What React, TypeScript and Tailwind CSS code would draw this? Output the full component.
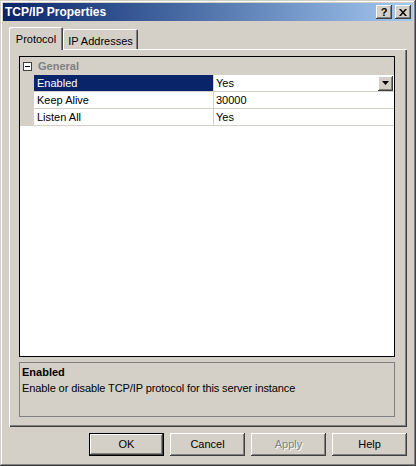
import React from "react";

const raised =
  "shadow-[inset_-1px_-1px_0_#404040,inset_1px_1px_0_#ffffff,inset_-2px_-2px_0_#808080,inset_2px_2px_0_#d4d0c8]";

function TitleBtn({ children }: { children: React.ReactNode }) {
  return (
    <div
      className={`w-[16px] h-[14px] bg-[#d4d0c8] flex items-center justify-center text-black font-bold text-[11px] leading-none ${raised}`}
    >
      {children}
    </div>
  );
}

function Btn({ label, def, disabled }: { label: string; def?: boolean; disabled?: boolean }) {
  const sh = def
    ? "shadow-[inset_0_0_0_1px_#000000,inset_-2px_-2px_0_#404040,inset_2px_2px_0_#ffffff,inset_-3px_-3px_0_#808080]"
    : raised;
  return (
    <div
      className={`w-[75px] h-[23px] bg-[#d4d0c8] flex items-center justify-center ${sh} ${
        disabled ? "text-[#808080] [text-shadow:1px_1px_0_#ffffff]" : "text-black"
      }`}
    >
      {label}
    </div>
  );
}

function Row({
  name,
  value,
  selected,
  dropdown,
}: {
  name: string;
  value: string;
  selected?: boolean;
  dropdown?: boolean;
}) {
  return (
    <div className="flex h-[17px] border-b border-[#d4d0c8]">
      <div className="w-[14px] bg-[#d4d0c8]" />
      <div
        className={`w-[180px] border-r border-[#d4d0c8] pl-[3px] flex items-center ${
          selected ? "bg-[#0a246a] text-white" : "text-black"
        }`}
      >
        {name}
      </div>
      <div className="flex-1 pl-[2px] flex items-center justify-between">
        <span>{value}</span>
        {dropdown && (
          <div className={`w-[15px] h-[15px] mr-[1px] bg-[#d4d0c8] flex items-center justify-center ${raised}`}>
            <svg width="7" height="4" viewBox="0 0 7 4">
              <path d="M0 0h7L3.5 4z" fill="#000" />
            </svg>
          </div>
        )}
      </div>
    </div>
  );
}

export default function App() {
  return (
    <div className="w-[416px] h-[466px] bg-[#d4d0c8] p-[3px] flex flex-col font-['Liberation_Sans',Arial,sans-serif] text-[11px] text-black shadow-[inset_-1px_-1px_0_#404040,inset_1px_1px_0_#d4d0c8,inset_-2px_-2px_0_#808080,inset_2px_2px_0_#ffffff]">
      <div className="h-[18px] flex items-center justify-between pl-[2px] pr-[2px] bg-linear-to-r from-[#0a246a] to-[#a6caf0]">
        <span className="text-white font-bold text-[12px]">TCP/IP Properties</span>
        <div className="flex gap-[3px]">
          <TitleBtn>?</TitleBtn>
          <TitleBtn>
            <svg width="8" height="7" viewBox="0 0 8 7">
              <path d="M0 0h2l2 2.5L6 0h2L5 3.5 8 7H6L4 4.5 2 7H0l3-3.5z" fill="#000" />
            </svg>
          </TitleBtn>
        </div>
      </div>

      <div className="flex flex-col px-[6px] pt-[6px]">
        <div className="flex items-end h-[22px]">
          <div className="relative z-10 h-[23px] w-[54px] -mb-[1px] bg-[#d4d0c8] rounded-t-[2px] flex items-start justify-center pt-[4px] shadow-[inset_1px_1px_0_#ffffff,inset_-1px_0_0_#404040,inset_-2px_0_0_#808080]">
            Protocol
          </div>
          <div className="h-[20px] w-[75px] bg-[#d4d0c8] rounded-t-[2px] flex items-start justify-center pt-[4px] shadow-[inset_1px_1px_0_#ffffff,inset_-1px_0_0_#404040,inset_-2px_0_0_#808080]">
            IP Addresses
          </div>
        </div>

        <div className="h-[378px] flex flex-col pt-[7px] pl-[10px] pr-[12px] pb-[10px] shadow-[inset_1px_1px_0_#ffffff,inset_-1px_-1px_0_#404040,inset_-2px_-2px_0_#808080]">
          <div className="h-[301px] border border-black bg-white flex flex-col">
            <div className="h-[18px] bg-[#d4d0c8] flex items-center">
              <div className="w-[14px] flex items-center justify-center">
                <div className="w-[9px] h-[9px] border border-[#404040] bg-white flex items-center justify-center">
                  <div className="w-[5px] h-[1px] bg-black" />
                </div>
              </div>
              <span className="pl-[4px] font-bold text-[#808080]">General</span>
            </div>
            <Row name="Enabled" value="Yes" selected dropdown />
            <Row name="Keep Alive" value="30000" />
            <Row name="Listen All" value="Yes" />
          </div>

          <div className="mt-[5px] h-[55px] border border-[#808080] px-[2px] pt-[1px] leading-[16px]">
            <div className="font-bold">Enabled</div>
            <div className="tracking-[-0.1px]">Enable or disable TCP/IP protocol for this server instance</div>
          </div>
        </div>

        <div className="mt-[6px] flex justify-end gap-[6px]">
          <Btn label="OK" def />
          <Btn label="Cancel" />
          <Btn label="Apply" disabled />
          <Btn label="Help" />
        </div>
      </div>
    </div>
  );
}
